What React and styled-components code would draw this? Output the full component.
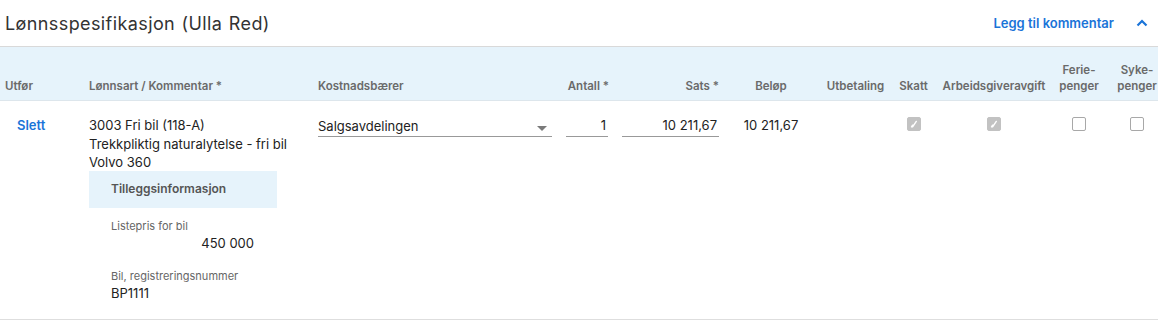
import React from 'react';
import styled, { createGlobalStyle } from 'styled-components';

const GlobalStyle = createGlobalStyle`
  body {
    margin: 0;
    background: #fff;
    font-family: Inter, "Noto Sans", sans-serif;
    color: #222;
    overflow: hidden;
  }
`;

const COLUMNS = '84px 229px 247px 52px 110px 98px 71px 45px 116px 54px 62px';

const Panel = styled.section`
  width: 1168px;
`;

const TopBar = styled.header`
  height: 47px;
  display: flex;
  align-items: center;
  padding: 0 10px 0 5px;
  width: 1158px;
  box-sizing: border-box;
  border-bottom: 1px solid #d9d9d9;
`;

const Title = styled.h2`
  margin: 0;
  flex: 1;
  font-size: 18px;
  font-weight: 400;
  color: #333;
  letter-spacing: 0.4px;
  word-spacing: 1px;
`;

const LinkButton = styled.button`
  border: none;
  background: none;
  padding: 0;
  font-family: inherit;
  font-size: 13px;
  line-height: 18.5px;
  text-align: left;
  font-weight: 600;
  color: #1a74d8;
  cursor: pointer;
`;

const Collapse = styled.button`
  border: none;
  background: none;
  margin-left: 22px;
  padding: 0;
  display: flex;
  align-items: center;
  color: #1a74d8;
`;

const HeadRow = styled.div`
  display: grid;
  grid-template-columns: ${COLUMNS};
  height: 53px;
  background: #e6f3fb;
  border-bottom: 1px solid #dde6ec;
  width: 1158px;
`;

const HeadCell = styled.div`
  display: flex;
  align-items: flex-end;
  justify-content: ${({ $align }) => ($align === 'right' ? 'flex-end' : $align === 'center' ? 'center' : 'flex-start')};
  text-align: ${({ $align }) => $align || 'left'};
  padding: 0 ${({ $pr }) => $pr || 0}px 6px ${({ $pl }) => $pl || 0}px;
  font-size: 11.5px;
  font-weight: 600;
  line-height: 16px;
  color: #6a6a6a;
  white-space: nowrap;
`;

const BodyRow = styled.div`
  display: grid;
  grid-template-columns: ${COLUMNS};
  width: 1158px;
  border-bottom: 1px solid #dedede;
  padding: 15px 0 17px;
  align-items: start;
`;

const Cell = styled.div`
  padding: 0 ${({ $pr }) => $pr || 0}px 0 ${({ $pl }) => $pl || 0}px;
  display: flex;
  flex-direction: column;
  align-items: ${({ $align }) => ($align === 'right' ? 'flex-end' : $align === 'center' ? 'center' : 'stretch')};
  font-size: 13px;
  line-height: 18.5px;
`;

const Text = styled.div`
  color: #222;
`;

const Select = styled.div`
  display: flex;
  align-items: center;
  justify-content: space-between;
  width: 234px;
  height: 21px;
  border-bottom: 1px solid #999;
  padding-right: 5px;
  box-sizing: border-box;
`;

const Caret = styled.span`
  width: 0;
  height: 0;
  border-left: 5px solid transparent;
  border-right: 5px solid transparent;
  border-top: 5px solid #7a7a7a;
  margin-top: 4px;
`;

const Input = styled.div`
  width: ${({ $w }) => $w}px;
  height: 21px;
  border-bottom: 1px solid #999;
  text-align: right;
  padding-right: 2px;
  box-sizing: border-box;
`;

const Check = styled.span`
  margin-top: 1px;
  width: 14px;
  height: 14px;
  box-sizing: border-box;
  border-radius: 2px;
  border: 1px solid ${({ $checked }) => ($checked ? '#c2c2c2' : '#a8a8a8')};
  background: ${({ $checked }) => ($checked ? '#c2c2c2' : '#fff')};
  display: flex;
  align-items: center;
  justify-content: center;
`;

const Extra = styled.div`
  margin-top: -1px;
  width: 188px;
`;

const ExtraHead = styled.div`
  background: #e6f3fb;
  height: 37px;
  display: flex;
  align-items: center;
  padding-left: 22px;
  font-size: 12px;
  font-weight: 600;
  color: #555;
`;

const Field = styled.div`
  padding: ${({ $first }) => ($first ? '10px' : '16px')} 23px 0 22px;
  display: flex;
  flex-direction: column;
`;

const FieldLabel = styled.div`
  font-size: 11px;
  line-height: 16px;
  color: #666;
`;

const FieldValue = styled.div`
  font-size: 13px;
  line-height: 18px;
  color: #222;
  text-align: ${({ $number }) => ($number ? 'right' : 'left')};
`;

const Checkbox = ({ checked }) => (
  <Check $checked={checked}>
    {checked && (
      <svg width="8" height="8" viewBox="0 0 8 8">
        <path d="M1.5 6.8 L2.6 5.2 M2.6 6.8 L6.3 1.4" stroke="#fff" strokeWidth="1.4" fill="none" strokeLinecap="round" />
      </svg>
    )}
  </Check>
);

const headers = [
  { label: 'Utfør', pl: 5 },
  { label: 'Lønnsart / Kommentar *', pl: 5 },
  { label: 'Kostnadsbærer', pl: 5 },
  { label: 'Antall *', align: 'right', pr: 3 },
  { label: 'Sats *', align: 'right', pr: 3 },
  { label: 'Beløp', align: 'center' },
  { label: 'Utbetaling', align: 'center' },
  { label: 'Skatt', align: 'center' },
  { label: 'Arbeidsgiveravgift', align: 'center' },
  { label: ['Ferie-', 'penger'], align: 'center' },
  { label: ['Syke-', 'penger'], align: 'center' },
];

const App = () => (
  <>
    <GlobalStyle />
    <Panel>
      <TopBar>
        <Title>Lønnsspesifikasjon (Ulla Red)</Title>
        <LinkButton>Legg til kommentar</LinkButton>
        <Collapse aria-label="Skjul">
          <svg width="12" height="8" viewBox="0 0 12 8">
            <path d="M1.5 6.5 L6 2 L10.5 6.5" stroke="currentColor" strokeWidth="2.2" fill="none" />
          </svg>
        </Collapse>
      </TopBar>

      <HeadRow>
        {headers.map((h, i) => (
          <HeadCell key={i} $align={h.align} $pl={h.pl} $pr={h.pr}>
            {Array.isArray(h.label) ? (
              <span>
                {h.label[0]}
                <br />
                {h.label[1]}
              </span>
            ) : (
              h.label
            )}
          </HeadCell>
        ))}
      </HeadRow>

      <BodyRow>
        <Cell $pl={17}>
          <LinkButton>Slett</LinkButton>
        </Cell>
        <Cell $pl={5}>
          <Text>3003 Fri bil (118-A)</Text>
          <Text>Trekkpliktig naturalytelse - fri bil</Text>
          <Text>Volvo 360</Text>
          <Extra>
            <ExtraHead>Tilleggsinformasjon</ExtraHead>
            <Field $first>
              <FieldLabel>Listepris for bil</FieldLabel>
              <FieldValue $number>450 000</FieldValue>
            </Field>
            <Field>
              <FieldLabel>Bil, registreringsnummer</FieldLabel>
              <FieldValue>BP1111</FieldValue>
            </Field>
          </Extra>
        </Cell>
        <Cell $pl={5}>
          <Select>
            <span>Salgsavdelingen</span>
            <Caret />
          </Select>
        </Cell>
        <Cell $align="right" $pr={4}>
          <Input $w={42}>1</Input>
        </Cell>
        <Cell $align="right" $pr={3}>
          <Input $w={97}>10 211,67</Input>
        </Cell>
        <Cell $align="center">
          <Text>10 211,67</Text>
        </Cell>
        <Cell />
        <Cell $align="center">
          <Checkbox checked />
        </Cell>
        <Cell $align="center">
          <Checkbox checked />
        </Cell>
        <Cell $align="center">
          <Checkbox />
        </Cell>
        <Cell $align="center">
          <Checkbox />
        </Cell>
      </BodyRow>
    </Panel>
  </>
);

export default App;
